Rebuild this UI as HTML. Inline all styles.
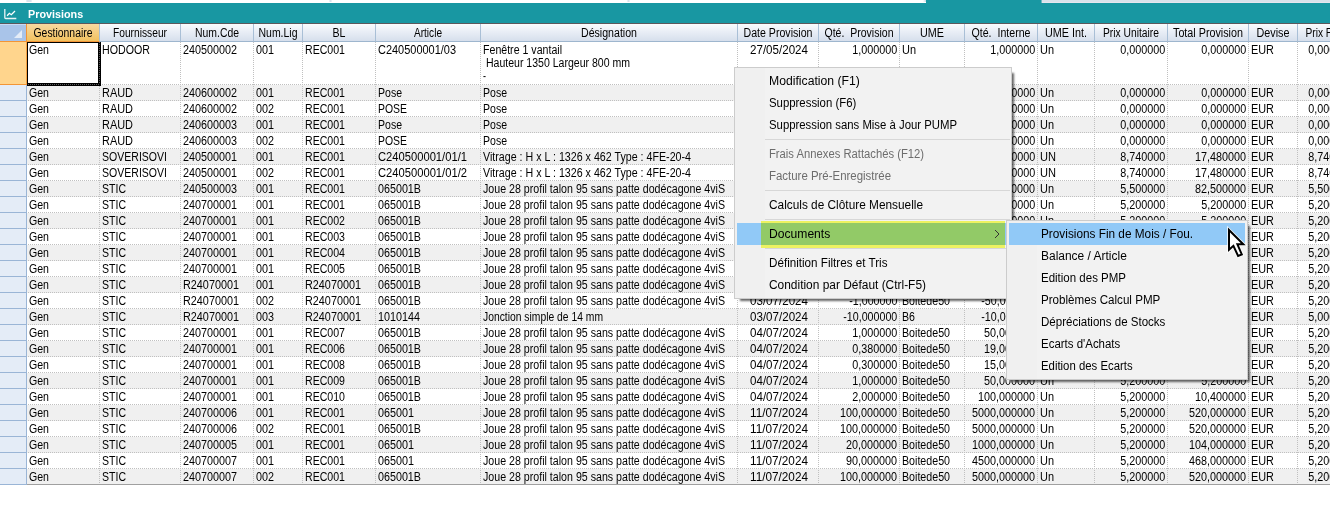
<!DOCTYPE html>
<html lang="fr">
<head>
<meta charset="utf-8">
<title>Provisions</title>
<style>
html,body{margin:0;padding:0;background:#fff}
body{width:1330px;height:508px;overflow:hidden;position:relative;font-family:"Liberation Sans", sans-serif;font-size:12.5px;color:#000}
div,span{box-sizing:border-box}
#w{position:absolute;left:0;top:0;width:1330px;height:508px;overflow:hidden;background:#fff;will-change:transform}
.abs,.c,.h,.rh,.mi,.mi2{position:absolute}
#top{left:0;top:0;width:1330px;height:3px;background:#fff}
#title{left:0;top:3px;width:1330px;height:21px;background:#1897a2;border-bottom:1px solid #5b585c}
#ttxt{left:28px;top:6px;height:16px;line-height:17px;color:#fff;font-size:11.5px;font-weight:bold;white-space:nowrap;transform-origin:0 50%;transform:scaleX(0.9386)}
.h{top:24px;height:18px;background:linear-gradient(#f9fcfd 0%,#e9eef6 45%,#d6dfec 100%);border-bottom:1px solid #9eb6ce;border-right:1px solid #a9bfd6;text-align:center;line-height:19px;white-space:nowrap;overflow:hidden}
.h.sel{background:linear-gradient(#f9d9a0 0%,#f5cd7f 50%,#f1c15f 100%);border-bottom:1px solid #f29536}
.h span,.c span{display:inline-block;white-space:pre}
.h span{position:absolute;left:50%;top:0;width:200px;margin-left:-100px;text-align:center}
.rh{left:0;width:27px;background:#e4ecf7;border-right:1px solid #9ab5d6;border-bottom:1px solid #9ab5d6}
.rh.sel{background:#ffd58d;border-right:1px solid #f7a142;border-bottom:1px solid #f29536}
.c{height:16px;line-height:13px;overflow:hidden;white-space:nowrap}
.c span{position:absolute;top:2px}
.l span{transform-origin:0 50%;left:2.3px}
.r span{transform-origin:100% 50%;right:2px}
.m span{transform-origin:50% 50%;left:50%;margin-left:-49.5px;width:100px;text-align:center}
.row{position:absolute;left:27px;width:1303px}
.alt{background:#f0f0f0}
.hl{position:absolute;left:28px;width:1302px;height:1px;background:repeating-linear-gradient(90deg,#c0c0c0 0 1px,transparent 1px 2px)}
.vl{position:absolute;top:42px;height:443px;width:1px;background:repeating-linear-gradient(180deg,#c0c0c0 0 1px,transparent 1px 2px)}
.menu{position:absolute;background:#f2f2f2;border:1px solid #ccc;box-shadow:4px 4px 2px -2px rgba(0,0,0,.6)}
.gut{position:absolute;left:0;top:0;bottom:0;background:#f0f0f0}
.mi,.mi2{height:22px;line-height:23px;font-size:12px;white-space:nowrap;color:#000}
.mi span,.mi2 span{display:inline-block;transform-origin:0 50%;white-space:pre}
.dis{color:#6d6d6d}
.sep{position:absolute;height:1px;background:#d7d7d7}

</style>
</head>
<body>
<div id="w">
<div id="top" class="abs"></div>
<div class="abs" style="left:26px;top:0;width:6px;height:2px;background:linear-gradient(90deg,#f0f3f8,#dae3ec 1.5px,#dae3ec 4.5px,#f0f3f8)"></div>
<div class="abs" style="left:329px;top:0;width:3px;height:2px;background:linear-gradient(90deg,#f3f5f9,#dae3ec 1.5px,#f3f5f9)"></div>
<div class="abs" style="left:627px;top:0;width:3px;height:2px;background:linear-gradient(90deg,#f3f5f9,#dae3ec 1.5px,#f3f5f9)"></div>
<div class="abs" style="left:923px;top:0;width:3px;height:2px;background:linear-gradient(90deg,#fff,#dde4ec 2px,#c5d8e0)"></div>
<div class="abs" style="left:926px;top:0;width:116px;height:3px;background:#1897a2"></div>
<div class="abs" style="left:1041px;top:0;width:1px;height:3px;background:#6fb9c1"></div>
<div class="abs" style="left:1042px;top:0;width:288px;height:3px;background:linear-gradient(#d9e2eb 0,#d9e2eb 2px,#e6e6ef 2px)"></div>
<div id="title" class="abs"></div>
<svg class="abs" style="left:4px;top:8px" width="14" height="12" viewBox="0 0 14 12"><path d="M0.8 1V9.6Q0.8 10.5 1.7 10.5H12.3" fill="none" stroke="#e8f4f5" stroke-width="1.3"/><path d="M3.1 7.8L5.4 5.3L7.3 6.7L11 3" fill="none" stroke="#fff" stroke-width="1.3"/></svg>
<div id="ttxt" class="abs">Provisions</div>
<div class="h abs" style="left:0;width:27px;background:linear-gradient(#d9e6f8 0,#a9c4e9 1.5px,#a9c4e9 100%);border-right:1px solid #f29536;border-bottom:1px solid #f29536"></div>
<svg class="abs" style="left:14px;top:30px" width="8" height="8" viewBox="0 0 8 8"><path d="M8 0V8H0Z" fill="#e4ecf7"/></svg>
<div class="h sel" style="left:27px;width:73px"><span style="transform:scaleX(0.8325)">Gestionnaire</span></div>
<div class="h" style="left:100px;width:81px"><span style="transform:scaleX(0.8182)">Fournisseur</span></div>
<div class="h" style="left:181px;width:73px"><span style="transform:scaleX(0.8334)">Num.Cde</span></div>
<div class="h" style="left:254px;width:49px"><span style="transform:scaleX(0.8379)">Num.Lig</span></div>
<div class="h" style="left:303px;width:73px"><span style="transform:scaleX(0.8498)">BL</span></div>
<div class="h" style="left:376px;width:105px"><span style="transform:scaleX(0.8061)">Article</span></div>
<div class="h" style="left:481px;width:257px"><span style="transform:scaleX(0.8483)">Désignation</span></div>
<div class="h" style="left:738px;width:81px"><span style="transform:scaleX(0.8487)">Date Provision</span></div>
<div class="h" style="left:819px;width:81px"><span style="transform:scaleX(0.8416)">Qté.  Provision</span></div>
<div class="h" style="left:900px;width:65px"><span style="transform:scaleX(0.8639)">UME</span></div>
<div class="h" style="left:965px;width:73px"><span style="transform:scaleX(0.8491)">Qté.  Interne</span></div>
<div class="h" style="left:1038px;width:57px"><span style="transform:scaleX(0.8638)">UME Int.</span></div>
<div class="h" style="left:1095px;width:73px"><span style="transform:scaleX(0.8226)">Prix Unitaire</span></div>
<div class="h" style="left:1168px;width:81px"><span style="transform:scaleX(0.861)">Total Provision</span></div>
<div class="h" style="left:1249px;width:49px"><span style="transform:scaleX(0.8635)">Devise</span></div>
<div class="h" style="left:1298px;width:58px"><span style="transform:scaleX(0.8144)">Prix Fact.</span></div>
<div class="rh sel" style="top:42px;height:43px"></div>
<div class="hl" style="top:84px"></div>
<div class="rh" style="top:85px;height:16px"></div>
<div class="row alt" style="top:85px;height:16px"></div>
<div class="hl" style="top:100px"></div>
<div class="rh" style="top:101px;height:16px"></div>
<div class="hl" style="top:116px"></div>
<div class="rh" style="top:117px;height:16px"></div>
<div class="row alt" style="top:117px;height:16px"></div>
<div class="hl" style="top:132px"></div>
<div class="rh" style="top:133px;height:16px"></div>
<div class="hl" style="top:148px"></div>
<div class="rh" style="top:149px;height:16px"></div>
<div class="row alt" style="top:149px;height:16px"></div>
<div class="hl" style="top:164px"></div>
<div class="rh" style="top:165px;height:16px"></div>
<div class="hl" style="top:180px"></div>
<div class="rh" style="top:181px;height:16px"></div>
<div class="row alt" style="top:181px;height:16px"></div>
<div class="hl" style="top:196px"></div>
<div class="rh" style="top:197px;height:16px"></div>
<div class="hl" style="top:212px"></div>
<div class="rh" style="top:213px;height:16px"></div>
<div class="row alt" style="top:213px;height:16px"></div>
<div class="hl" style="top:228px"></div>
<div class="rh" style="top:229px;height:16px"></div>
<div class="hl" style="top:244px"></div>
<div class="rh" style="top:245px;height:16px"></div>
<div class="row alt" style="top:245px;height:16px"></div>
<div class="hl" style="top:260px"></div>
<div class="rh" style="top:261px;height:16px"></div>
<div class="hl" style="top:276px"></div>
<div class="rh" style="top:277px;height:16px"></div>
<div class="row alt" style="top:277px;height:16px"></div>
<div class="hl" style="top:292px"></div>
<div class="rh" style="top:293px;height:16px"></div>
<div class="hl" style="top:308px"></div>
<div class="rh" style="top:309px;height:16px"></div>
<div class="row alt" style="top:309px;height:16px"></div>
<div class="hl" style="top:324px"></div>
<div class="rh" style="top:325px;height:16px"></div>
<div class="hl" style="top:340px"></div>
<div class="rh" style="top:341px;height:16px"></div>
<div class="row alt" style="top:341px;height:16px"></div>
<div class="hl" style="top:356px"></div>
<div class="rh" style="top:357px;height:16px"></div>
<div class="hl" style="top:372px"></div>
<div class="rh" style="top:373px;height:16px"></div>
<div class="row alt" style="top:373px;height:16px"></div>
<div class="hl" style="top:388px"></div>
<div class="rh" style="top:389px;height:16px"></div>
<div class="hl" style="top:404px"></div>
<div class="rh" style="top:405px;height:16px"></div>
<div class="row alt" style="top:405px;height:16px"></div>
<div class="hl" style="top:420px"></div>
<div class="rh" style="top:421px;height:16px"></div>
<div class="hl" style="top:436px"></div>
<div class="rh" style="top:437px;height:16px"></div>
<div class="row alt" style="top:437px;height:16px"></div>
<div class="hl" style="top:452px"></div>
<div class="rh" style="top:453px;height:16px"></div>
<div class="hl" style="top:468px"></div>
<div class="rh" style="top:469px;height:16px"></div>
<div class="row alt" style="top:469px;height:16px"></div>
<div class="hl" style="top:484px"></div>
<div class="vl" style="left:99px"></div>
<div class="vl" style="left:180px"></div>
<div class="vl" style="left:253px"></div>
<div class="vl" style="left:302px"></div>
<div class="vl" style="left:375px"></div>
<div class="vl" style="left:480px"></div>
<div class="vl" style="left:737px"></div>
<div class="vl" style="left:818px"></div>
<div class="vl" style="left:899px"></div>
<div class="vl" style="left:964px"></div>
<div class="vl" style="left:1037px"></div>
<div class="vl" style="left:1094px"></div>
<div class="vl" style="left:1167px"></div>
<div class="vl" style="left:1248px"></div>
<div class="vl" style="left:1297px"></div>
<div class="abs" style="left:27px;top:484px;width:1303px;height:1px;background:#a0a0a0"></div>
<div class="c l" style="left:100px;top:42px;width:80px;height:42px"><span style="transform:scaleX(0.8533)">HODOOR</span></div>
<div class="c l" style="left:181px;top:42px;width:72px;height:42px"><span style="transform:scaleX(0.8629)">240500002</span></div>
<div class="c l" style="left:254px;top:42px;width:48px;height:42px"><span style="transform:scaleX(0.8629)">001</span></div>
<div class="c l" style="left:303px;top:42px;width:72px;height:42px"><span style="transform:scaleX(0.8466)">REC001</span></div>
<div class="c l" style="left:376px;top:42px;width:104px;height:42px"><span style="transform:scaleX(0.8766)">C240500001/03</span></div>
<div class="c l" style="left:481px;top:42px;width:256px;height:42px"><span style="top:2px;transform:scaleX(0.8485)">Fenêtre 1 vantail</span><span style="top:15px;transform:scaleX(0.8428)"> Hauteur 1350 Largeur 800 mm</span><span style="top:28px;transform:scaleX(0.7191)">-</span></div>
<div class="c m" style="left:738px;top:42px;width:80px;height:42px"><span style="transform:scaleX(0.9271)">27/05/2024</span></div>
<div class="c r" style="left:819px;top:42px;width:80px;height:42px"><span style="transform:scaleX(0.8631)">1,000000</span></div>
<div class="c l" style="left:900px;top:42px;width:64px;height:42px"><span style="transform:scaleX(0.8759)">Un</span></div>
<div class="c r" style="left:965px;top:42px;width:72px;height:42px"><span style="transform:scaleX(0.8631)">1,000000</span></div>
<div class="c l" style="left:1038px;top:42px;width:56px;height:42px"><span style="transform:scaleX(0.8759)">Un</span></div>
<div class="c r" style="left:1095px;top:42px;width:72px;height:42px"><span style="transform:scaleX(0.8631)">0,000000</span></div>
<div class="c r" style="left:1168px;top:42px;width:80px;height:42px"><span style="transform:scaleX(0.8631)">0,000000</span></div>
<div class="c l" style="left:1249px;top:42px;width:48px;height:42px"><span style="transform:scaleX(0.871)">EUR</span></div>
<div class="c r" style="left:1298px;top:42px;width:57px;height:42px"><span style="transform:scaleX(0.8631)">0,000000</span></div>
<div class="c l" style="left:27px;top:85px;width:72px;height:15px"><span style="transform:scaleX(0.846)">Gen</span></div>
<div class="c l" style="left:100px;top:85px;width:80px;height:15px"><span style="transform:scaleX(0.8752)">RAUD</span></div>
<div class="c l" style="left:181px;top:85px;width:72px;height:15px"><span style="transform:scaleX(0.8629)">240600002</span></div>
<div class="c l" style="left:254px;top:85px;width:48px;height:15px"><span style="transform:scaleX(0.8629)">001</span></div>
<div class="c l" style="left:303px;top:85px;width:72px;height:15px"><span style="transform:scaleX(0.8466)">REC001</span></div>
<div class="c l" style="left:376px;top:85px;width:104px;height:15px"><span style="transform:scaleX(0.8421)">Pose</span></div>
<div class="c l" style="left:481px;top:85px;width:256px;height:15px"><span style="transform:scaleX(0.8421)">Pose</span></div>
<div class="c m" style="left:738px;top:85px;width:80px;height:15px"><span style="transform:scaleX(0.9271)">17/06/2024</span></div>
<div class="c r" style="left:819px;top:85px;width:80px;height:15px"><span style="transform:scaleX(0.8631)">1,000000</span></div>
<div class="c l" style="left:900px;top:85px;width:64px;height:15px"><span style="transform:scaleX(0.8759)">Un</span></div>
<div class="c r" style="left:965px;top:85px;width:72px;height:15px"><span style="transform:scaleX(0.8631)">1,000000</span></div>
<div class="c l" style="left:1038px;top:85px;width:56px;height:15px"><span style="transform:scaleX(0.8759)">Un</span></div>
<div class="c r" style="left:1095px;top:85px;width:72px;height:15px"><span style="transform:scaleX(0.8631)">0,000000</span></div>
<div class="c r" style="left:1168px;top:85px;width:80px;height:15px"><span style="transform:scaleX(0.8631)">0,000000</span></div>
<div class="c l" style="left:1249px;top:85px;width:48px;height:15px"><span style="transform:scaleX(0.871)">EUR</span></div>
<div class="c r" style="left:1298px;top:85px;width:57px;height:15px"><span style="transform:scaleX(0.8631)">0,000000</span></div>
<div class="c l" style="left:27px;top:101px;width:72px;height:15px"><span style="transform:scaleX(0.846)">Gen</span></div>
<div class="c l" style="left:100px;top:101px;width:80px;height:15px"><span style="transform:scaleX(0.8752)">RAUD</span></div>
<div class="c l" style="left:181px;top:101px;width:72px;height:15px"><span style="transform:scaleX(0.8629)">240600002</span></div>
<div class="c l" style="left:254px;top:101px;width:48px;height:15px"><span style="transform:scaleX(0.8629)">002</span></div>
<div class="c l" style="left:303px;top:101px;width:72px;height:15px"><span style="transform:scaleX(0.8466)">REC001</span></div>
<div class="c l" style="left:376px;top:101px;width:104px;height:15px"><span style="transform:scaleX(0.8345)">POSE</span></div>
<div class="c l" style="left:481px;top:101px;width:256px;height:15px"><span style="transform:scaleX(0.8421)">Pose</span></div>
<div class="c m" style="left:738px;top:101px;width:80px;height:15px"><span style="transform:scaleX(0.9271)">17/06/2024</span></div>
<div class="c r" style="left:819px;top:101px;width:80px;height:15px"><span style="transform:scaleX(0.8631)">1,000000</span></div>
<div class="c l" style="left:900px;top:101px;width:64px;height:15px"><span style="transform:scaleX(0.8759)">Un</span></div>
<div class="c r" style="left:965px;top:101px;width:72px;height:15px"><span style="transform:scaleX(0.8631)">1,000000</span></div>
<div class="c l" style="left:1038px;top:101px;width:56px;height:15px"><span style="transform:scaleX(0.8759)">Un</span></div>
<div class="c r" style="left:1095px;top:101px;width:72px;height:15px"><span style="transform:scaleX(0.8631)">0,000000</span></div>
<div class="c r" style="left:1168px;top:101px;width:80px;height:15px"><span style="transform:scaleX(0.8631)">0,000000</span></div>
<div class="c l" style="left:1249px;top:101px;width:48px;height:15px"><span style="transform:scaleX(0.871)">EUR</span></div>
<div class="c r" style="left:1298px;top:101px;width:57px;height:15px"><span style="transform:scaleX(0.8631)">0,000000</span></div>
<div class="c l" style="left:27px;top:117px;width:72px;height:15px"><span style="transform:scaleX(0.846)">Gen</span></div>
<div class="c l" style="left:100px;top:117px;width:80px;height:15px"><span style="transform:scaleX(0.8752)">RAUD</span></div>
<div class="c l" style="left:181px;top:117px;width:72px;height:15px"><span style="transform:scaleX(0.8629)">240600003</span></div>
<div class="c l" style="left:254px;top:117px;width:48px;height:15px"><span style="transform:scaleX(0.8629)">001</span></div>
<div class="c l" style="left:303px;top:117px;width:72px;height:15px"><span style="transform:scaleX(0.8466)">REC001</span></div>
<div class="c l" style="left:376px;top:117px;width:104px;height:15px"><span style="transform:scaleX(0.8421)">Pose</span></div>
<div class="c l" style="left:481px;top:117px;width:256px;height:15px"><span style="transform:scaleX(0.8421)">Pose</span></div>
<div class="c m" style="left:738px;top:117px;width:80px;height:15px"><span style="transform:scaleX(0.9271)">17/06/2024</span></div>
<div class="c r" style="left:819px;top:117px;width:80px;height:15px"><span style="transform:scaleX(0.8631)">1,000000</span></div>
<div class="c l" style="left:900px;top:117px;width:64px;height:15px"><span style="transform:scaleX(0.8759)">Un</span></div>
<div class="c r" style="left:965px;top:117px;width:72px;height:15px"><span style="transform:scaleX(0.8631)">1,000000</span></div>
<div class="c l" style="left:1038px;top:117px;width:56px;height:15px"><span style="transform:scaleX(0.8759)">Un</span></div>
<div class="c r" style="left:1095px;top:117px;width:72px;height:15px"><span style="transform:scaleX(0.8631)">0,000000</span></div>
<div class="c r" style="left:1168px;top:117px;width:80px;height:15px"><span style="transform:scaleX(0.8631)">0,000000</span></div>
<div class="c l" style="left:1249px;top:117px;width:48px;height:15px"><span style="transform:scaleX(0.871)">EUR</span></div>
<div class="c r" style="left:1298px;top:117px;width:57px;height:15px"><span style="transform:scaleX(0.8631)">0,000000</span></div>
<div class="c l" style="left:27px;top:133px;width:72px;height:15px"><span style="transform:scaleX(0.846)">Gen</span></div>
<div class="c l" style="left:100px;top:133px;width:80px;height:15px"><span style="transform:scaleX(0.8752)">RAUD</span></div>
<div class="c l" style="left:181px;top:133px;width:72px;height:15px"><span style="transform:scaleX(0.8629)">240600003</span></div>
<div class="c l" style="left:254px;top:133px;width:48px;height:15px"><span style="transform:scaleX(0.8629)">002</span></div>
<div class="c l" style="left:303px;top:133px;width:72px;height:15px"><span style="transform:scaleX(0.8466)">REC001</span></div>
<div class="c l" style="left:376px;top:133px;width:104px;height:15px"><span style="transform:scaleX(0.8345)">POSE</span></div>
<div class="c l" style="left:481px;top:133px;width:256px;height:15px"><span style="transform:scaleX(0.8421)">Pose</span></div>
<div class="c m" style="left:738px;top:133px;width:80px;height:15px"><span style="transform:scaleX(0.9271)">17/06/2024</span></div>
<div class="c r" style="left:819px;top:133px;width:80px;height:15px"><span style="transform:scaleX(0.8631)">1,000000</span></div>
<div class="c l" style="left:900px;top:133px;width:64px;height:15px"><span style="transform:scaleX(0.8759)">Un</span></div>
<div class="c r" style="left:965px;top:133px;width:72px;height:15px"><span style="transform:scaleX(0.8631)">1,000000</span></div>
<div class="c l" style="left:1038px;top:133px;width:56px;height:15px"><span style="transform:scaleX(0.8759)">Un</span></div>
<div class="c r" style="left:1095px;top:133px;width:72px;height:15px"><span style="transform:scaleX(0.8631)">0,000000</span></div>
<div class="c r" style="left:1168px;top:133px;width:80px;height:15px"><span style="transform:scaleX(0.8631)">0,000000</span></div>
<div class="c l" style="left:1249px;top:133px;width:48px;height:15px"><span style="transform:scaleX(0.871)">EUR</span></div>
<div class="c r" style="left:1298px;top:133px;width:57px;height:15px"><span style="transform:scaleX(0.8631)">0,000000</span></div>
<div class="c l" style="left:27px;top:149px;width:72px;height:15px"><span style="transform:scaleX(0.846)">Gen</span></div>
<div class="c l" style="left:100px;top:149px;width:80px;height:15px"><span style="transform:scaleX(0.843)">SOVERISOVI</span></div>
<div class="c l" style="left:181px;top:149px;width:72px;height:15px"><span style="transform:scaleX(0.8629)">240500001</span></div>
<div class="c l" style="left:254px;top:149px;width:48px;height:15px"><span style="transform:scaleX(0.8629)">001</span></div>
<div class="c l" style="left:303px;top:149px;width:72px;height:15px"><span style="transform:scaleX(0.8466)">REC001</span></div>
<div class="c l" style="left:376px;top:149px;width:104px;height:15px"><span style="transform:scaleX(0.8953)">C240500001/01/1</span></div>
<div class="c l" style="left:481px;top:149px;width:256px;height:15px"><span style="transform:scaleX(0.8536)">Vitrage : H x L : 1326 x 462 Type : 4FE-20-4</span></div>
<div class="c m" style="left:738px;top:149px;width:80px;height:15px"><span style="transform:scaleX(0.9271)">27/05/2024</span></div>
<div class="c r" style="left:819px;top:149px;width:80px;height:15px"><span style="transform:scaleX(0.8631)">2,000000</span></div>
<div class="c l" style="left:900px;top:149px;width:64px;height:15px"><span style="transform:scaleX(0.8858)">UN</span></div>
<div class="c r" style="left:965px;top:149px;width:72px;height:15px"><span style="transform:scaleX(0.8631)">2,000000</span></div>
<div class="c l" style="left:1038px;top:149px;width:56px;height:15px"><span style="transform:scaleX(0.8858)">UN</span></div>
<div class="c r" style="left:1095px;top:149px;width:72px;height:15px"><span style="transform:scaleX(0.8631)">8,740000</span></div>
<div class="c r" style="left:1168px;top:149px;width:80px;height:15px"><span style="transform:scaleX(0.863)">17,480000</span></div>
<div class="c l" style="left:1249px;top:149px;width:48px;height:15px"><span style="transform:scaleX(0.871)">EUR</span></div>
<div class="c r" style="left:1298px;top:149px;width:57px;height:15px"><span style="transform:scaleX(0.8631)">8,740000</span></div>
<div class="c l" style="left:27px;top:165px;width:72px;height:15px"><span style="transform:scaleX(0.846)">Gen</span></div>
<div class="c l" style="left:100px;top:165px;width:80px;height:15px"><span style="transform:scaleX(0.843)">SOVERISOVI</span></div>
<div class="c l" style="left:181px;top:165px;width:72px;height:15px"><span style="transform:scaleX(0.8629)">240500001</span></div>
<div class="c l" style="left:254px;top:165px;width:48px;height:15px"><span style="transform:scaleX(0.8629)">002</span></div>
<div class="c l" style="left:303px;top:165px;width:72px;height:15px"><span style="transform:scaleX(0.8466)">REC001</span></div>
<div class="c l" style="left:376px;top:165px;width:104px;height:15px"><span style="transform:scaleX(0.8953)">C240500001/01/2</span></div>
<div class="c l" style="left:481px;top:165px;width:256px;height:15px"><span style="transform:scaleX(0.8536)">Vitrage : H x L : 1326 x 462 Type : 4FE-20-4</span></div>
<div class="c m" style="left:738px;top:165px;width:80px;height:15px"><span style="transform:scaleX(0.9271)">27/05/2024</span></div>
<div class="c r" style="left:819px;top:165px;width:80px;height:15px"><span style="transform:scaleX(0.8631)">2,000000</span></div>
<div class="c l" style="left:900px;top:165px;width:64px;height:15px"><span style="transform:scaleX(0.8858)">UN</span></div>
<div class="c r" style="left:965px;top:165px;width:72px;height:15px"><span style="transform:scaleX(0.8631)">2,000000</span></div>
<div class="c l" style="left:1038px;top:165px;width:56px;height:15px"><span style="transform:scaleX(0.8858)">UN</span></div>
<div class="c r" style="left:1095px;top:165px;width:72px;height:15px"><span style="transform:scaleX(0.8631)">8,740000</span></div>
<div class="c r" style="left:1168px;top:165px;width:80px;height:15px"><span style="transform:scaleX(0.863)">17,480000</span></div>
<div class="c l" style="left:1249px;top:165px;width:48px;height:15px"><span style="transform:scaleX(0.871)">EUR</span></div>
<div class="c r" style="left:1298px;top:165px;width:57px;height:15px"><span style="transform:scaleX(0.8631)">8,740000</span></div>
<div class="c l" style="left:27px;top:181px;width:72px;height:15px"><span style="transform:scaleX(0.846)">Gen</span></div>
<div class="c l" style="left:100px;top:181px;width:80px;height:15px"><span style="transform:scaleX(0.8426)">STIC</span></div>
<div class="c l" style="left:181px;top:181px;width:72px;height:15px"><span style="transform:scaleX(0.8629)">240500003</span></div>
<div class="c l" style="left:254px;top:181px;width:48px;height:15px"><span style="transform:scaleX(0.8629)">001</span></div>
<div class="c l" style="left:303px;top:181px;width:72px;height:15px"><span style="transform:scaleX(0.8466)">REC001</span></div>
<div class="c l" style="left:376px;top:181px;width:104px;height:15px"><span style="transform:scaleX(0.8589)">065001B</span></div>
<div class="c l" style="left:481px;top:181px;width:256px;height:15px"><span style="transform:scaleX(0.8514)">Joue 28 profil talon 95 sans patte dodécagone 4viS</span></div>
<div class="c m" style="left:738px;top:181px;width:80px;height:15px"><span style="transform:scaleX(0.9271)">27/05/2024</span></div>
<div class="c r" style="left:819px;top:181px;width:80px;height:15px"><span style="transform:scaleX(0.863)">15,000000</span></div>
<div class="c l" style="left:900px;top:181px;width:64px;height:15px"><span style="transform:scaleX(0.8759)">Un</span></div>
<div class="c r" style="left:965px;top:181px;width:72px;height:15px"><span style="transform:scaleX(0.863)">15,000000</span></div>
<div class="c l" style="left:1038px;top:181px;width:56px;height:15px"><span style="transform:scaleX(0.8759)">Un</span></div>
<div class="c r" style="left:1095px;top:181px;width:72px;height:15px"><span style="transform:scaleX(0.8631)">5,500000</span></div>
<div class="c r" style="left:1168px;top:181px;width:80px;height:15px"><span style="transform:scaleX(0.863)">82,500000</span></div>
<div class="c l" style="left:1249px;top:181px;width:48px;height:15px"><span style="transform:scaleX(0.871)">EUR</span></div>
<div class="c r" style="left:1298px;top:181px;width:57px;height:15px"><span style="transform:scaleX(0.8631)">5,500000</span></div>
<div class="c l" style="left:27px;top:197px;width:72px;height:15px"><span style="transform:scaleX(0.846)">Gen</span></div>
<div class="c l" style="left:100px;top:197px;width:80px;height:15px"><span style="transform:scaleX(0.8426)">STIC</span></div>
<div class="c l" style="left:181px;top:197px;width:72px;height:15px"><span style="transform:scaleX(0.8629)">240700001</span></div>
<div class="c l" style="left:254px;top:197px;width:48px;height:15px"><span style="transform:scaleX(0.8629)">001</span></div>
<div class="c l" style="left:303px;top:197px;width:72px;height:15px"><span style="transform:scaleX(0.8466)">REC001</span></div>
<div class="c l" style="left:376px;top:197px;width:104px;height:15px"><span style="transform:scaleX(0.8589)">065001B</span></div>
<div class="c l" style="left:481px;top:197px;width:256px;height:15px"><span style="transform:scaleX(0.8514)">Joue 28 profil talon 95 sans patte dodécagone 4viS</span></div>
<div class="c m" style="left:738px;top:197px;width:80px;height:15px"><span style="transform:scaleX(0.9271)">03/07/2024</span></div>
<div class="c r" style="left:819px;top:197px;width:80px;height:15px"><span style="transform:scaleX(0.8631)">1,000000</span></div>
<div class="c l" style="left:900px;top:197px;width:64px;height:15px"><span style="transform:scaleX(0.8759)">Un</span></div>
<div class="c r" style="left:965px;top:197px;width:72px;height:15px"><span style="transform:scaleX(0.8631)">1,000000</span></div>
<div class="c l" style="left:1038px;top:197px;width:56px;height:15px"><span style="transform:scaleX(0.8759)">Un</span></div>
<div class="c r" style="left:1095px;top:197px;width:72px;height:15px"><span style="transform:scaleX(0.8631)">5,200000</span></div>
<div class="c r" style="left:1168px;top:197px;width:80px;height:15px"><span style="transform:scaleX(0.8631)">5,200000</span></div>
<div class="c l" style="left:1249px;top:197px;width:48px;height:15px"><span style="transform:scaleX(0.871)">EUR</span></div>
<div class="c r" style="left:1298px;top:197px;width:57px;height:15px"><span style="transform:scaleX(0.8631)">5,200000</span></div>
<div class="c l" style="left:27px;top:213px;width:72px;height:15px"><span style="transform:scaleX(0.846)">Gen</span></div>
<div class="c l" style="left:100px;top:213px;width:80px;height:15px"><span style="transform:scaleX(0.8426)">STIC</span></div>
<div class="c l" style="left:181px;top:213px;width:72px;height:15px"><span style="transform:scaleX(0.8629)">240700001</span></div>
<div class="c l" style="left:254px;top:213px;width:48px;height:15px"><span style="transform:scaleX(0.8629)">001</span></div>
<div class="c l" style="left:303px;top:213px;width:72px;height:15px"><span style="transform:scaleX(0.8466)">REC002</span></div>
<div class="c l" style="left:376px;top:213px;width:104px;height:15px"><span style="transform:scaleX(0.8589)">065001B</span></div>
<div class="c l" style="left:481px;top:213px;width:256px;height:15px"><span style="transform:scaleX(0.8514)">Joue 28 profil talon 95 sans patte dodécagone 4viS</span></div>
<div class="c m" style="left:738px;top:213px;width:80px;height:15px"><span style="transform:scaleX(0.9271)">03/07/2024</span></div>
<div class="c r" style="left:819px;top:213px;width:80px;height:15px"><span style="transform:scaleX(0.8631)">1,000000</span></div>
<div class="c l" style="left:900px;top:213px;width:64px;height:15px"><span style="transform:scaleX(0.8759)">Un</span></div>
<div class="c r" style="left:965px;top:213px;width:72px;height:15px"><span style="transform:scaleX(0.8631)">1,000000</span></div>
<div class="c l" style="left:1038px;top:213px;width:56px;height:15px"><span style="transform:scaleX(0.8759)">Un</span></div>
<div class="c r" style="left:1095px;top:213px;width:72px;height:15px"><span style="transform:scaleX(0.8631)">5,200000</span></div>
<div class="c r" style="left:1168px;top:213px;width:80px;height:15px"><span style="transform:scaleX(0.8631)">5,200000</span></div>
<div class="c l" style="left:1249px;top:213px;width:48px;height:15px"><span style="transform:scaleX(0.871)">EUR</span></div>
<div class="c r" style="left:1298px;top:213px;width:57px;height:15px"><span style="transform:scaleX(0.8631)">5,200000</span></div>
<div class="c l" style="left:27px;top:229px;width:72px;height:15px"><span style="transform:scaleX(0.846)">Gen</span></div>
<div class="c l" style="left:100px;top:229px;width:80px;height:15px"><span style="transform:scaleX(0.8426)">STIC</span></div>
<div class="c l" style="left:181px;top:229px;width:72px;height:15px"><span style="transform:scaleX(0.8629)">240700001</span></div>
<div class="c l" style="left:254px;top:229px;width:48px;height:15px"><span style="transform:scaleX(0.8629)">001</span></div>
<div class="c l" style="left:303px;top:229px;width:72px;height:15px"><span style="transform:scaleX(0.8466)">REC003</span></div>
<div class="c l" style="left:376px;top:229px;width:104px;height:15px"><span style="transform:scaleX(0.8589)">065001B</span></div>
<div class="c l" style="left:481px;top:229px;width:256px;height:15px"><span style="transform:scaleX(0.8514)">Joue 28 profil talon 95 sans patte dodécagone 4viS</span></div>
<div class="c m" style="left:738px;top:229px;width:80px;height:15px"><span style="transform:scaleX(0.9271)">03/07/2024</span></div>
<div class="c r" style="left:819px;top:229px;width:80px;height:15px"><span style="transform:scaleX(0.8631)">1,000000</span></div>
<div class="c l" style="left:900px;top:229px;width:64px;height:15px"><span style="transform:scaleX(0.8759)">Un</span></div>
<div class="c r" style="left:965px;top:229px;width:72px;height:15px"><span style="transform:scaleX(0.8631)">1,000000</span></div>
<div class="c l" style="left:1038px;top:229px;width:56px;height:15px"><span style="transform:scaleX(0.8759)">Un</span></div>
<div class="c r" style="left:1095px;top:229px;width:72px;height:15px"><span style="transform:scaleX(0.8631)">5,200000</span></div>
<div class="c r" style="left:1168px;top:229px;width:80px;height:15px"><span style="transform:scaleX(0.8631)">5,200000</span></div>
<div class="c l" style="left:1249px;top:229px;width:48px;height:15px"><span style="transform:scaleX(0.871)">EUR</span></div>
<div class="c r" style="left:1298px;top:229px;width:57px;height:15px"><span style="transform:scaleX(0.8631)">5,200000</span></div>
<div class="c l" style="left:27px;top:245px;width:72px;height:15px"><span style="transform:scaleX(0.846)">Gen</span></div>
<div class="c l" style="left:100px;top:245px;width:80px;height:15px"><span style="transform:scaleX(0.8426)">STIC</span></div>
<div class="c l" style="left:181px;top:245px;width:72px;height:15px"><span style="transform:scaleX(0.8629)">240700001</span></div>
<div class="c l" style="left:254px;top:245px;width:48px;height:15px"><span style="transform:scaleX(0.8629)">001</span></div>
<div class="c l" style="left:303px;top:245px;width:72px;height:15px"><span style="transform:scaleX(0.8466)">REC004</span></div>
<div class="c l" style="left:376px;top:245px;width:104px;height:15px"><span style="transform:scaleX(0.8589)">065001B</span></div>
<div class="c l" style="left:481px;top:245px;width:256px;height:15px"><span style="transform:scaleX(0.8514)">Joue 28 profil talon 95 sans patte dodécagone 4viS</span></div>
<div class="c m" style="left:738px;top:245px;width:80px;height:15px"><span style="transform:scaleX(0.9271)">03/07/2024</span></div>
<div class="c r" style="left:819px;top:245px;width:80px;height:15px"><span style="transform:scaleX(0.8631)">1,000000</span></div>
<div class="c l" style="left:900px;top:245px;width:64px;height:15px"><span style="transform:scaleX(0.8759)">Un</span></div>
<div class="c r" style="left:965px;top:245px;width:72px;height:15px"><span style="transform:scaleX(0.8631)">1,000000</span></div>
<div class="c l" style="left:1038px;top:245px;width:56px;height:15px"><span style="transform:scaleX(0.8759)">Un</span></div>
<div class="c r" style="left:1095px;top:245px;width:72px;height:15px"><span style="transform:scaleX(0.8631)">5,200000</span></div>
<div class="c r" style="left:1168px;top:245px;width:80px;height:15px"><span style="transform:scaleX(0.8631)">5,200000</span></div>
<div class="c l" style="left:1249px;top:245px;width:48px;height:15px"><span style="transform:scaleX(0.871)">EUR</span></div>
<div class="c r" style="left:1298px;top:245px;width:57px;height:15px"><span style="transform:scaleX(0.8631)">5,200000</span></div>
<div class="c l" style="left:27px;top:261px;width:72px;height:15px"><span style="transform:scaleX(0.846)">Gen</span></div>
<div class="c l" style="left:100px;top:261px;width:80px;height:15px"><span style="transform:scaleX(0.8426)">STIC</span></div>
<div class="c l" style="left:181px;top:261px;width:72px;height:15px"><span style="transform:scaleX(0.8629)">240700001</span></div>
<div class="c l" style="left:254px;top:261px;width:48px;height:15px"><span style="transform:scaleX(0.8629)">001</span></div>
<div class="c l" style="left:303px;top:261px;width:72px;height:15px"><span style="transform:scaleX(0.8466)">REC005</span></div>
<div class="c l" style="left:376px;top:261px;width:104px;height:15px"><span style="transform:scaleX(0.8589)">065001B</span></div>
<div class="c l" style="left:481px;top:261px;width:256px;height:15px"><span style="transform:scaleX(0.8514)">Joue 28 profil talon 95 sans patte dodécagone 4viS</span></div>
<div class="c m" style="left:738px;top:261px;width:80px;height:15px"><span style="transform:scaleX(0.9271)">03/07/2024</span></div>
<div class="c r" style="left:819px;top:261px;width:80px;height:15px"><span style="transform:scaleX(0.8631)">1,000000</span></div>
<div class="c l" style="left:900px;top:261px;width:64px;height:15px"><span style="transform:scaleX(0.8759)">Un</span></div>
<div class="c r" style="left:965px;top:261px;width:72px;height:15px"><span style="transform:scaleX(0.8631)">1,000000</span></div>
<div class="c l" style="left:1038px;top:261px;width:56px;height:15px"><span style="transform:scaleX(0.8759)">Un</span></div>
<div class="c r" style="left:1095px;top:261px;width:72px;height:15px"><span style="transform:scaleX(0.8631)">5,200000</span></div>
<div class="c r" style="left:1168px;top:261px;width:80px;height:15px"><span style="transform:scaleX(0.8631)">5,200000</span></div>
<div class="c l" style="left:1249px;top:261px;width:48px;height:15px"><span style="transform:scaleX(0.871)">EUR</span></div>
<div class="c r" style="left:1298px;top:261px;width:57px;height:15px"><span style="transform:scaleX(0.8631)">5,200000</span></div>
<div class="c l" style="left:27px;top:277px;width:72px;height:15px"><span style="transform:scaleX(0.846)">Gen</span></div>
<div class="c l" style="left:100px;top:277px;width:80px;height:15px"><span style="transform:scaleX(0.8426)">STIC</span></div>
<div class="c l" style="left:181px;top:277px;width:72px;height:15px"><span style="transform:scaleX(0.8661)">R24070001</span></div>
<div class="c l" style="left:254px;top:277px;width:48px;height:15px"><span style="transform:scaleX(0.8629)">001</span></div>
<div class="c l" style="left:303px;top:277px;width:72px;height:15px"><span style="transform:scaleX(0.8661)">R24070001</span></div>
<div class="c l" style="left:376px;top:277px;width:104px;height:15px"><span style="transform:scaleX(0.8589)">065001B</span></div>
<div class="c l" style="left:481px;top:277px;width:256px;height:15px"><span style="transform:scaleX(0.8514)">Joue 28 profil talon 95 sans patte dodécagone 4viS</span></div>
<div class="c m" style="left:738px;top:277px;width:80px;height:15px"><span style="transform:scaleX(0.9271)">03/07/2024</span></div>
<div class="c r" style="left:819px;top:277px;width:80px;height:15px"><span style="transform:scaleX(0.8524)">-1,000000</span></div>
<div class="c l" style="left:900px;top:277px;width:64px;height:15px"><span style="transform:scaleX(0.8524)">Boitede50</span></div>
<div class="c r" style="left:965px;top:277px;width:72px;height:15px"><span style="transform:scaleX(0.8535)">-50,000000</span></div>
<div class="c l" style="left:1038px;top:277px;width:56px;height:15px"><span style="transform:scaleX(0.8759)">Un</span></div>
<div class="c r" style="left:1095px;top:277px;width:72px;height:15px"><span style="transform:scaleX(0.8631)">5,200000</span></div>
<div class="c r" style="left:1168px;top:277px;width:80px;height:15px"><span style="transform:scaleX(0.8524)">-5,200000</span></div>
<div class="c l" style="left:1249px;top:277px;width:48px;height:15px"><span style="transform:scaleX(0.871)">EUR</span></div>
<div class="c r" style="left:1298px;top:277px;width:57px;height:15px"><span style="transform:scaleX(0.8631)">5,200000</span></div>
<div class="c l" style="left:27px;top:293px;width:72px;height:15px"><span style="transform:scaleX(0.846)">Gen</span></div>
<div class="c l" style="left:100px;top:293px;width:80px;height:15px"><span style="transform:scaleX(0.8426)">STIC</span></div>
<div class="c l" style="left:181px;top:293px;width:72px;height:15px"><span style="transform:scaleX(0.8661)">R24070001</span></div>
<div class="c l" style="left:254px;top:293px;width:48px;height:15px"><span style="transform:scaleX(0.8629)">002</span></div>
<div class="c l" style="left:303px;top:293px;width:72px;height:15px"><span style="transform:scaleX(0.8661)">R24070001</span></div>
<div class="c l" style="left:376px;top:293px;width:104px;height:15px"><span style="transform:scaleX(0.8589)">065001B</span></div>
<div class="c l" style="left:481px;top:293px;width:256px;height:15px"><span style="transform:scaleX(0.8514)">Joue 28 profil talon 95 sans patte dodécagone 4viS</span></div>
<div class="c m" style="left:738px;top:293px;width:80px;height:15px"><span style="transform:scaleX(0.9271)">03/07/2024</span></div>
<div class="c r" style="left:819px;top:293px;width:80px;height:15px"><span style="transform:scaleX(0.8524)">-1,000000</span></div>
<div class="c l" style="left:900px;top:293px;width:64px;height:15px"><span style="transform:scaleX(0.8524)">Boitede50</span></div>
<div class="c r" style="left:965px;top:293px;width:72px;height:15px"><span style="transform:scaleX(0.8535)">-50,000000</span></div>
<div class="c l" style="left:1038px;top:293px;width:56px;height:15px"><span style="transform:scaleX(0.8759)">Un</span></div>
<div class="c r" style="left:1095px;top:293px;width:72px;height:15px"><span style="transform:scaleX(0.8631)">5,200000</span></div>
<div class="c r" style="left:1168px;top:293px;width:80px;height:15px"><span style="transform:scaleX(0.8524)">-5,200000</span></div>
<div class="c l" style="left:1249px;top:293px;width:48px;height:15px"><span style="transform:scaleX(0.871)">EUR</span></div>
<div class="c r" style="left:1298px;top:293px;width:57px;height:15px"><span style="transform:scaleX(0.8631)">5,200000</span></div>
<div class="c l" style="left:27px;top:309px;width:72px;height:15px"><span style="transform:scaleX(0.846)">Gen</span></div>
<div class="c l" style="left:100px;top:309px;width:80px;height:15px"><span style="transform:scaleX(0.8426)">STIC</span></div>
<div class="c l" style="left:181px;top:309px;width:72px;height:15px"><span style="transform:scaleX(0.8661)">R24070001</span></div>
<div class="c l" style="left:254px;top:309px;width:48px;height:15px"><span style="transform:scaleX(0.8629)">003</span></div>
<div class="c l" style="left:303px;top:309px;width:72px;height:15px"><span style="transform:scaleX(0.8661)">R24070001</span></div>
<div class="c l" style="left:376px;top:309px;width:104px;height:15px"><span style="transform:scaleX(0.8629)">1010144</span></div>
<div class="c l" style="left:481px;top:309px;width:256px;height:15px"><span style="transform:scaleX(0.8264)">Jonction simple de 14 mm</span></div>
<div class="c m" style="left:738px;top:309px;width:80px;height:15px"><span style="transform:scaleX(0.9271)">03/07/2024</span></div>
<div class="c r" style="left:819px;top:309px;width:80px;height:15px"><span style="transform:scaleX(0.8535)">-10,000000</span></div>
<div class="c l" style="left:900px;top:309px;width:64px;height:15px"><span style="transform:scaleX(0.8498)">B6</span></div>
<div class="c r" style="left:965px;top:309px;width:72px;height:15px"><span style="transform:scaleX(0.8535)">-10,000000</span></div>
<div class="c l" style="left:1038px;top:309px;width:56px;height:15px"><span style="transform:scaleX(0.8759)">Un</span></div>
<div class="c r" style="left:1095px;top:309px;width:72px;height:15px"><span style="transform:scaleX(0.8631)">5,000000</span></div>
<div class="c r" style="left:1168px;top:309px;width:80px;height:15px"><span style="transform:scaleX(0.8535)">-50,000000</span></div>
<div class="c l" style="left:1249px;top:309px;width:48px;height:15px"><span style="transform:scaleX(0.871)">EUR</span></div>
<div class="c r" style="left:1298px;top:309px;width:57px;height:15px"><span style="transform:scaleX(0.8631)">5,000000</span></div>
<div class="c l" style="left:27px;top:325px;width:72px;height:15px"><span style="transform:scaleX(0.846)">Gen</span></div>
<div class="c l" style="left:100px;top:325px;width:80px;height:15px"><span style="transform:scaleX(0.8426)">STIC</span></div>
<div class="c l" style="left:181px;top:325px;width:72px;height:15px"><span style="transform:scaleX(0.8629)">240700001</span></div>
<div class="c l" style="left:254px;top:325px;width:48px;height:15px"><span style="transform:scaleX(0.8629)">001</span></div>
<div class="c l" style="left:303px;top:325px;width:72px;height:15px"><span style="transform:scaleX(0.8466)">REC007</span></div>
<div class="c l" style="left:376px;top:325px;width:104px;height:15px"><span style="transform:scaleX(0.8589)">065001B</span></div>
<div class="c l" style="left:481px;top:325px;width:256px;height:15px"><span style="transform:scaleX(0.8514)">Joue 28 profil talon 95 sans patte dodécagone 4viS</span></div>
<div class="c m" style="left:738px;top:325px;width:80px;height:15px"><span style="transform:scaleX(0.9271)">04/07/2024</span></div>
<div class="c r" style="left:819px;top:325px;width:80px;height:15px"><span style="transform:scaleX(0.8631)">1,000000</span></div>
<div class="c l" style="left:900px;top:325px;width:64px;height:15px"><span style="transform:scaleX(0.8524)">Boitede50</span></div>
<div class="c r" style="left:965px;top:325px;width:72px;height:15px"><span style="transform:scaleX(0.863)">50,000000</span></div>
<div class="c l" style="left:1038px;top:325px;width:56px;height:15px"><span style="transform:scaleX(0.8759)">Un</span></div>
<div class="c r" style="left:1095px;top:325px;width:72px;height:15px"><span style="transform:scaleX(0.8631)">5,200000</span></div>
<div class="c r" style="left:1168px;top:325px;width:80px;height:15px"><span style="transform:scaleX(0.8631)">5,200000</span></div>
<div class="c l" style="left:1249px;top:325px;width:48px;height:15px"><span style="transform:scaleX(0.871)">EUR</span></div>
<div class="c r" style="left:1298px;top:325px;width:57px;height:15px"><span style="transform:scaleX(0.8631)">5,200000</span></div>
<div class="c l" style="left:27px;top:341px;width:72px;height:15px"><span style="transform:scaleX(0.846)">Gen</span></div>
<div class="c l" style="left:100px;top:341px;width:80px;height:15px"><span style="transform:scaleX(0.8426)">STIC</span></div>
<div class="c l" style="left:181px;top:341px;width:72px;height:15px"><span style="transform:scaleX(0.8629)">240700001</span></div>
<div class="c l" style="left:254px;top:341px;width:48px;height:15px"><span style="transform:scaleX(0.8629)">001</span></div>
<div class="c l" style="left:303px;top:341px;width:72px;height:15px"><span style="transform:scaleX(0.8466)">REC006</span></div>
<div class="c l" style="left:376px;top:341px;width:104px;height:15px"><span style="transform:scaleX(0.8589)">065001B</span></div>
<div class="c l" style="left:481px;top:341px;width:256px;height:15px"><span style="transform:scaleX(0.8514)">Joue 28 profil talon 95 sans patte dodécagone 4viS</span></div>
<div class="c m" style="left:738px;top:341px;width:80px;height:15px"><span style="transform:scaleX(0.9271)">04/07/2024</span></div>
<div class="c r" style="left:819px;top:341px;width:80px;height:15px"><span style="transform:scaleX(0.8631)">0,380000</span></div>
<div class="c l" style="left:900px;top:341px;width:64px;height:15px"><span style="transform:scaleX(0.8524)">Boitede50</span></div>
<div class="c r" style="left:965px;top:341px;width:72px;height:15px"><span style="transform:scaleX(0.863)">19,000000</span></div>
<div class="c l" style="left:1038px;top:341px;width:56px;height:15px"><span style="transform:scaleX(0.8759)">Un</span></div>
<div class="c r" style="left:1095px;top:341px;width:72px;height:15px"><span style="transform:scaleX(0.8631)">5,200000</span></div>
<div class="c r" style="left:1168px;top:341px;width:80px;height:15px"><span style="transform:scaleX(0.8631)">1,976000</span></div>
<div class="c l" style="left:1249px;top:341px;width:48px;height:15px"><span style="transform:scaleX(0.871)">EUR</span></div>
<div class="c r" style="left:1298px;top:341px;width:57px;height:15px"><span style="transform:scaleX(0.8631)">5,200000</span></div>
<div class="c l" style="left:27px;top:357px;width:72px;height:15px"><span style="transform:scaleX(0.846)">Gen</span></div>
<div class="c l" style="left:100px;top:357px;width:80px;height:15px"><span style="transform:scaleX(0.8426)">STIC</span></div>
<div class="c l" style="left:181px;top:357px;width:72px;height:15px"><span style="transform:scaleX(0.8629)">240700001</span></div>
<div class="c l" style="left:254px;top:357px;width:48px;height:15px"><span style="transform:scaleX(0.8629)">001</span></div>
<div class="c l" style="left:303px;top:357px;width:72px;height:15px"><span style="transform:scaleX(0.8466)">REC008</span></div>
<div class="c l" style="left:376px;top:357px;width:104px;height:15px"><span style="transform:scaleX(0.8589)">065001B</span></div>
<div class="c l" style="left:481px;top:357px;width:256px;height:15px"><span style="transform:scaleX(0.8514)">Joue 28 profil talon 95 sans patte dodécagone 4viS</span></div>
<div class="c m" style="left:738px;top:357px;width:80px;height:15px"><span style="transform:scaleX(0.9271)">04/07/2024</span></div>
<div class="c r" style="left:819px;top:357px;width:80px;height:15px"><span style="transform:scaleX(0.8631)">0,300000</span></div>
<div class="c l" style="left:900px;top:357px;width:64px;height:15px"><span style="transform:scaleX(0.8524)">Boitede50</span></div>
<div class="c r" style="left:965px;top:357px;width:72px;height:15px"><span style="transform:scaleX(0.863)">15,000000</span></div>
<div class="c l" style="left:1038px;top:357px;width:56px;height:15px"><span style="transform:scaleX(0.8759)">Un</span></div>
<div class="c r" style="left:1095px;top:357px;width:72px;height:15px"><span style="transform:scaleX(0.8631)">5,200000</span></div>
<div class="c r" style="left:1168px;top:357px;width:80px;height:15px"><span style="transform:scaleX(0.8631)">1,560000</span></div>
<div class="c l" style="left:1249px;top:357px;width:48px;height:15px"><span style="transform:scaleX(0.871)">EUR</span></div>
<div class="c r" style="left:1298px;top:357px;width:57px;height:15px"><span style="transform:scaleX(0.8631)">5,200000</span></div>
<div class="c l" style="left:27px;top:373px;width:72px;height:15px"><span style="transform:scaleX(0.846)">Gen</span></div>
<div class="c l" style="left:100px;top:373px;width:80px;height:15px"><span style="transform:scaleX(0.8426)">STIC</span></div>
<div class="c l" style="left:181px;top:373px;width:72px;height:15px"><span style="transform:scaleX(0.8629)">240700001</span></div>
<div class="c l" style="left:254px;top:373px;width:48px;height:15px"><span style="transform:scaleX(0.8629)">001</span></div>
<div class="c l" style="left:303px;top:373px;width:72px;height:15px"><span style="transform:scaleX(0.8466)">REC009</span></div>
<div class="c l" style="left:376px;top:373px;width:104px;height:15px"><span style="transform:scaleX(0.8589)">065001B</span></div>
<div class="c l" style="left:481px;top:373px;width:256px;height:15px"><span style="transform:scaleX(0.8514)">Joue 28 profil talon 95 sans patte dodécagone 4viS</span></div>
<div class="c m" style="left:738px;top:373px;width:80px;height:15px"><span style="transform:scaleX(0.9271)">04/07/2024</span></div>
<div class="c r" style="left:819px;top:373px;width:80px;height:15px"><span style="transform:scaleX(0.8631)">1,000000</span></div>
<div class="c l" style="left:900px;top:373px;width:64px;height:15px"><span style="transform:scaleX(0.8524)">Boitede50</span></div>
<div class="c r" style="left:965px;top:373px;width:72px;height:15px"><span style="transform:scaleX(0.863)">50,000000</span></div>
<div class="c l" style="left:1038px;top:373px;width:56px;height:15px"><span style="transform:scaleX(0.8759)">Un</span></div>
<div class="c r" style="left:1095px;top:373px;width:72px;height:15px"><span style="transform:scaleX(0.8631)">5,200000</span></div>
<div class="c r" style="left:1168px;top:373px;width:80px;height:15px"><span style="transform:scaleX(0.8631)">5,200000</span></div>
<div class="c l" style="left:1249px;top:373px;width:48px;height:15px"><span style="transform:scaleX(0.871)">EUR</span></div>
<div class="c r" style="left:1298px;top:373px;width:57px;height:15px"><span style="transform:scaleX(0.8631)">5,200000</span></div>
<div class="c l" style="left:27px;top:389px;width:72px;height:15px"><span style="transform:scaleX(0.846)">Gen</span></div>
<div class="c l" style="left:100px;top:389px;width:80px;height:15px"><span style="transform:scaleX(0.8426)">STIC</span></div>
<div class="c l" style="left:181px;top:389px;width:72px;height:15px"><span style="transform:scaleX(0.8629)">240700001</span></div>
<div class="c l" style="left:254px;top:389px;width:48px;height:15px"><span style="transform:scaleX(0.8629)">001</span></div>
<div class="c l" style="left:303px;top:389px;width:72px;height:15px"><span style="transform:scaleX(0.8466)">REC010</span></div>
<div class="c l" style="left:376px;top:389px;width:104px;height:15px"><span style="transform:scaleX(0.8589)">065001B</span></div>
<div class="c l" style="left:481px;top:389px;width:256px;height:15px"><span style="transform:scaleX(0.8514)">Joue 28 profil talon 95 sans patte dodécagone 4viS</span></div>
<div class="c m" style="left:738px;top:389px;width:80px;height:15px"><span style="transform:scaleX(0.9271)">04/07/2024</span></div>
<div class="c r" style="left:819px;top:389px;width:80px;height:15px"><span style="transform:scaleX(0.8631)">2,000000</span></div>
<div class="c l" style="left:900px;top:389px;width:64px;height:15px"><span style="transform:scaleX(0.8524)">Boitede50</span></div>
<div class="c r" style="left:965px;top:389px;width:72px;height:15px"><span style="transform:scaleX(0.863)">100,000000</span></div>
<div class="c l" style="left:1038px;top:389px;width:56px;height:15px"><span style="transform:scaleX(0.8759)">Un</span></div>
<div class="c r" style="left:1095px;top:389px;width:72px;height:15px"><span style="transform:scaleX(0.8631)">5,200000</span></div>
<div class="c r" style="left:1168px;top:389px;width:80px;height:15px"><span style="transform:scaleX(0.863)">10,400000</span></div>
<div class="c l" style="left:1249px;top:389px;width:48px;height:15px"><span style="transform:scaleX(0.871)">EUR</span></div>
<div class="c r" style="left:1298px;top:389px;width:57px;height:15px"><span style="transform:scaleX(0.8631)">5,200000</span></div>
<div class="c l" style="left:27px;top:405px;width:72px;height:15px"><span style="transform:scaleX(0.846)">Gen</span></div>
<div class="c l" style="left:100px;top:405px;width:80px;height:15px"><span style="transform:scaleX(0.8426)">STIC</span></div>
<div class="c l" style="left:181px;top:405px;width:72px;height:15px"><span style="transform:scaleX(0.8629)">240700006</span></div>
<div class="c l" style="left:254px;top:405px;width:48px;height:15px"><span style="transform:scaleX(0.8629)">001</span></div>
<div class="c l" style="left:303px;top:405px;width:72px;height:15px"><span style="transform:scaleX(0.8466)">REC001</span></div>
<div class="c l" style="left:376px;top:405px;width:104px;height:15px"><span style="transform:scaleX(0.8629)">065001</span></div>
<div class="c l" style="left:481px;top:405px;width:256px;height:15px"><span style="transform:scaleX(0.8514)">Joue 28 profil talon 95 sans patte dodécagone 4viS</span></div>
<div class="c m" style="left:738px;top:405px;width:80px;height:15px"><span style="transform:scaleX(0.9409)">11/07/2024</span></div>
<div class="c r" style="left:819px;top:405px;width:80px;height:15px"><span style="transform:scaleX(0.863)">100,000000</span></div>
<div class="c l" style="left:900px;top:405px;width:64px;height:15px"><span style="transform:scaleX(0.8524)">Boitede50</span></div>
<div class="c r" style="left:965px;top:405px;width:72px;height:15px"><span style="transform:scaleX(0.863)">5000,000000</span></div>
<div class="c l" style="left:1038px;top:405px;width:56px;height:15px"><span style="transform:scaleX(0.8759)">Un</span></div>
<div class="c r" style="left:1095px;top:405px;width:72px;height:15px"><span style="transform:scaleX(0.8631)">5,200000</span></div>
<div class="c r" style="left:1168px;top:405px;width:80px;height:15px"><span style="transform:scaleX(0.863)">520,000000</span></div>
<div class="c l" style="left:1249px;top:405px;width:48px;height:15px"><span style="transform:scaleX(0.871)">EUR</span></div>
<div class="c r" style="left:1298px;top:405px;width:57px;height:15px"><span style="transform:scaleX(0.8631)">5,200000</span></div>
<div class="c l" style="left:27px;top:421px;width:72px;height:15px"><span style="transform:scaleX(0.846)">Gen</span></div>
<div class="c l" style="left:100px;top:421px;width:80px;height:15px"><span style="transform:scaleX(0.8426)">STIC</span></div>
<div class="c l" style="left:181px;top:421px;width:72px;height:15px"><span style="transform:scaleX(0.8629)">240700006</span></div>
<div class="c l" style="left:254px;top:421px;width:48px;height:15px"><span style="transform:scaleX(0.8629)">002</span></div>
<div class="c l" style="left:303px;top:421px;width:72px;height:15px"><span style="transform:scaleX(0.8466)">REC001</span></div>
<div class="c l" style="left:376px;top:421px;width:104px;height:15px"><span style="transform:scaleX(0.8589)">065001B</span></div>
<div class="c l" style="left:481px;top:421px;width:256px;height:15px"><span style="transform:scaleX(0.8514)">Joue 28 profil talon 95 sans patte dodécagone 4viS</span></div>
<div class="c m" style="left:738px;top:421px;width:80px;height:15px"><span style="transform:scaleX(0.9409)">11/07/2024</span></div>
<div class="c r" style="left:819px;top:421px;width:80px;height:15px"><span style="transform:scaleX(0.863)">100,000000</span></div>
<div class="c l" style="left:900px;top:421px;width:64px;height:15px"><span style="transform:scaleX(0.8524)">Boitede50</span></div>
<div class="c r" style="left:965px;top:421px;width:72px;height:15px"><span style="transform:scaleX(0.863)">5000,000000</span></div>
<div class="c l" style="left:1038px;top:421px;width:56px;height:15px"><span style="transform:scaleX(0.8759)">Un</span></div>
<div class="c r" style="left:1095px;top:421px;width:72px;height:15px"><span style="transform:scaleX(0.8631)">5,200000</span></div>
<div class="c r" style="left:1168px;top:421px;width:80px;height:15px"><span style="transform:scaleX(0.863)">520,000000</span></div>
<div class="c l" style="left:1249px;top:421px;width:48px;height:15px"><span style="transform:scaleX(0.871)">EUR</span></div>
<div class="c r" style="left:1298px;top:421px;width:57px;height:15px"><span style="transform:scaleX(0.8631)">5,200000</span></div>
<div class="c l" style="left:27px;top:437px;width:72px;height:15px"><span style="transform:scaleX(0.846)">Gen</span></div>
<div class="c l" style="left:100px;top:437px;width:80px;height:15px"><span style="transform:scaleX(0.8426)">STIC</span></div>
<div class="c l" style="left:181px;top:437px;width:72px;height:15px"><span style="transform:scaleX(0.8629)">240700005</span></div>
<div class="c l" style="left:254px;top:437px;width:48px;height:15px"><span style="transform:scaleX(0.8629)">001</span></div>
<div class="c l" style="left:303px;top:437px;width:72px;height:15px"><span style="transform:scaleX(0.8466)">REC001</span></div>
<div class="c l" style="left:376px;top:437px;width:104px;height:15px"><span style="transform:scaleX(0.8629)">065001</span></div>
<div class="c l" style="left:481px;top:437px;width:256px;height:15px"><span style="transform:scaleX(0.8514)">Joue 28 profil talon 95 sans patte dodécagone 4viS</span></div>
<div class="c m" style="left:738px;top:437px;width:80px;height:15px"><span style="transform:scaleX(0.9409)">11/07/2024</span></div>
<div class="c r" style="left:819px;top:437px;width:80px;height:15px"><span style="transform:scaleX(0.863)">20,000000</span></div>
<div class="c l" style="left:900px;top:437px;width:64px;height:15px"><span style="transform:scaleX(0.8524)">Boitede50</span></div>
<div class="c r" style="left:965px;top:437px;width:72px;height:15px"><span style="transform:scaleX(0.863)">1000,000000</span></div>
<div class="c l" style="left:1038px;top:437px;width:56px;height:15px"><span style="transform:scaleX(0.8759)">Un</span></div>
<div class="c r" style="left:1095px;top:437px;width:72px;height:15px"><span style="transform:scaleX(0.8631)">5,200000</span></div>
<div class="c r" style="left:1168px;top:437px;width:80px;height:15px"><span style="transform:scaleX(0.863)">104,000000</span></div>
<div class="c l" style="left:1249px;top:437px;width:48px;height:15px"><span style="transform:scaleX(0.871)">EUR</span></div>
<div class="c r" style="left:1298px;top:437px;width:57px;height:15px"><span style="transform:scaleX(0.8631)">5,200000</span></div>
<div class="c l" style="left:27px;top:453px;width:72px;height:15px"><span style="transform:scaleX(0.846)">Gen</span></div>
<div class="c l" style="left:100px;top:453px;width:80px;height:15px"><span style="transform:scaleX(0.8426)">STIC</span></div>
<div class="c l" style="left:181px;top:453px;width:72px;height:15px"><span style="transform:scaleX(0.8629)">240700007</span></div>
<div class="c l" style="left:254px;top:453px;width:48px;height:15px"><span style="transform:scaleX(0.8629)">001</span></div>
<div class="c l" style="left:303px;top:453px;width:72px;height:15px"><span style="transform:scaleX(0.8466)">REC001</span></div>
<div class="c l" style="left:376px;top:453px;width:104px;height:15px"><span style="transform:scaleX(0.8629)">065001</span></div>
<div class="c l" style="left:481px;top:453px;width:256px;height:15px"><span style="transform:scaleX(0.8514)">Joue 28 profil talon 95 sans patte dodécagone 4viS</span></div>
<div class="c m" style="left:738px;top:453px;width:80px;height:15px"><span style="transform:scaleX(0.9409)">11/07/2024</span></div>
<div class="c r" style="left:819px;top:453px;width:80px;height:15px"><span style="transform:scaleX(0.863)">90,000000</span></div>
<div class="c l" style="left:900px;top:453px;width:64px;height:15px"><span style="transform:scaleX(0.8524)">Boitede50</span></div>
<div class="c r" style="left:965px;top:453px;width:72px;height:15px"><span style="transform:scaleX(0.863)">4500,000000</span></div>
<div class="c l" style="left:1038px;top:453px;width:56px;height:15px"><span style="transform:scaleX(0.8759)">Un</span></div>
<div class="c r" style="left:1095px;top:453px;width:72px;height:15px"><span style="transform:scaleX(0.8631)">5,200000</span></div>
<div class="c r" style="left:1168px;top:453px;width:80px;height:15px"><span style="transform:scaleX(0.863)">468,000000</span></div>
<div class="c l" style="left:1249px;top:453px;width:48px;height:15px"><span style="transform:scaleX(0.871)">EUR</span></div>
<div class="c r" style="left:1298px;top:453px;width:57px;height:15px"><span style="transform:scaleX(0.8631)">5,200000</span></div>
<div class="c l" style="left:27px;top:469px;width:72px;height:15px"><span style="transform:scaleX(0.846)">Gen</span></div>
<div class="c l" style="left:100px;top:469px;width:80px;height:15px"><span style="transform:scaleX(0.8426)">STIC</span></div>
<div class="c l" style="left:181px;top:469px;width:72px;height:15px"><span style="transform:scaleX(0.8629)">240700007</span></div>
<div class="c l" style="left:254px;top:469px;width:48px;height:15px"><span style="transform:scaleX(0.8629)">002</span></div>
<div class="c l" style="left:303px;top:469px;width:72px;height:15px"><span style="transform:scaleX(0.8466)">REC001</span></div>
<div class="c l" style="left:376px;top:469px;width:104px;height:15px"><span style="transform:scaleX(0.8589)">065001B</span></div>
<div class="c l" style="left:481px;top:469px;width:256px;height:15px"><span style="transform:scaleX(0.8514)">Joue 28 profil talon 95 sans patte dodécagone 4viS</span></div>
<div class="c m" style="left:738px;top:469px;width:80px;height:15px"><span style="transform:scaleX(0.9409)">11/07/2024</span></div>
<div class="c r" style="left:819px;top:469px;width:80px;height:15px"><span style="transform:scaleX(0.863)">100,000000</span></div>
<div class="c l" style="left:900px;top:469px;width:64px;height:15px"><span style="transform:scaleX(0.8524)">Boitede50</span></div>
<div class="c r" style="left:965px;top:469px;width:72px;height:15px"><span style="transform:scaleX(0.863)">5000,000000</span></div>
<div class="c l" style="left:1038px;top:469px;width:56px;height:15px"><span style="transform:scaleX(0.8759)">Un</span></div>
<div class="c r" style="left:1095px;top:469px;width:72px;height:15px"><span style="transform:scaleX(0.8631)">5,200000</span></div>
<div class="c r" style="left:1168px;top:469px;width:80px;height:15px"><span style="transform:scaleX(0.863)">520,000000</span></div>
<div class="c l" style="left:1249px;top:469px;width:48px;height:15px"><span style="transform:scaleX(0.871)">EUR</span></div>
<div class="c r" style="left:1298px;top:469px;width:57px;height:15px"><span style="transform:scaleX(0.8631)">5,200000</span></div>
<div class="abs" style="left:27px;top:42px;width:72px;height:42px;border:1px solid #000;background:#fff"></div>
<div class="c l" style="left:27px;top:42px;width:72px;height:42px"><span style="transform:scaleX(0.846)">Gen</span></div>
<div class="abs" style="left:99px;top:42px;width:1px;height:44px;background:repeating-linear-gradient(180deg,#5c5c5c 0 1px,#000 1px 2px)"></div>
<div class="abs" style="left:100px;top:42px;width:1px;height:44px;background:#000"></div>
<div class="abs" style="left:27px;top:84px;width:73px;height:1px;background:repeating-linear-gradient(90deg,#000 0 1px,#5c5c5c 1px 2px)"></div>
<div class="abs" style="left:27px;top:85px;width:74px;height:1px;background:#000"></div>
<div class="menu" style="left:734px;top:67px;width:278px;height:232px"><div class="gut" style="width:30px"></div></div>
<div class="sep" style="left:765px;top:139px;width:245px"></div>
<div class="sep" style="left:765px;top:190px;width:245px"></div>
<div class="sep" style="left:765px;top:219px;width:245px"></div>
<div class="sep" style="left:765px;top:248px;width:245px"></div>
<div class="abs" style="left:737px;top:223px;width:272px;height:22px;background:#91c9f7"></div>
<div class="abs" style="left:761px;top:221px;width:244px;height:27px;background:#ecf261"></div>
<div class="abs" style="left:761px;top:223px;width:244px;height:22px;background:#92ca67"></div>
<div class="mi" style="left:769px;top:70px"><span style="transform:scaleX(1.0171)">Modification (F1)</span></div>
<div class="mi" style="left:769px;top:92px"><span style="transform:scaleX(0.9484)">Suppression (F6)</span></div>
<div class="mi" style="left:769px;top:114px"><span style="transform:scaleX(0.9459)">Suppression sans Mise à Jour PUMP</span></div>
<div class="mi dis" style="left:769px;top:143px"><span style="transform:scaleX(0.9371)">Frais Annexes Rattachés (F12)</span></div>
<div class="mi dis" style="left:769px;top:165px"><span style="transform:scaleX(0.9527)">Facture Pré-Enregistrée</span></div>
<div class="mi" style="left:769px;top:194px"><span style="transform:scaleX(0.9867)">Calculs de Clôture Mensuelle</span></div>
<div class="mi" style="left:769px;top:223px"><span style="transform:scaleX(1.0098)">Documents</span></div>
<div class="mi" style="left:769px;top:252px"><span style="transform:scaleX(0.9709)">Définition Filtres et Tris</span></div>
<div class="mi" style="left:769px;top:274px"><span style="transform:scaleX(0.9933)">Condition par Défaut (Ctrl-F5)</span></div>
<svg class="abs" style="left:994px;top:229px" width="6" height="10" viewBox="0 0 6 10"><path d="M1 1L5 5L1 9" fill="none" stroke="#333" stroke-width="1"/></svg>
<div class="menu" style="left:1006px;top:220px;width:242px;height:160px"><div class="gut" style="width:30px"></div></div>
<div class="abs" style="left:1009px;top:223px;width:236px;height:22px;background:#91c9f7"></div>
<div class="mi2" style="left:1041px;top:223px"><span style="transform:scaleX(0.983)">Provisions Fin de Mois / Fou.</span></div>
<div class="mi2" style="left:1041px;top:245px"><span style="transform:scaleX(0.9971)">Balance / Article</span></div>
<div class="mi2" style="left:1041px;top:267px"><span style="transform:scaleX(0.9581)">Edition des PMP</span></div>
<div class="mi2" style="left:1041px;top:289px"><span style="transform:scaleX(0.967)">Problèmes Calcul PMP</span></div>
<div class="mi2" style="left:1041px;top:311px"><span style="transform:scaleX(0.9613)">Dépréciations de Stocks</span></div>
<div class="mi2" style="left:1041px;top:333px"><span style="transform:scaleX(0.9554)">Ecarts d'Achats</span></div>
<div class="mi2" style="left:1041px;top:355px"><span style="transform:scaleX(0.9471)">Edition des Ecarts</span></div>
<svg class="abs" style="left:1220px;top:220px" width="34" height="44" viewBox="1220 220 34 44"><path d="M1229 230V249.8L1233.4 245.8L1238.1 256L1241.8 254.4L1237.4 244.3H1243.3Z" fill="#fff" stroke="#fff" stroke-width="3.6" stroke-linejoin="miter" stroke-opacity=".9"/><path d="M1229 230V249.8L1233.4 245.8L1238.1 256L1241.8 254.4L1237.4 244.3H1243.3Z" fill="#fff" stroke="#000" stroke-width="2" stroke-linejoin="miter"/></svg>
</div>
</body>
</html>
